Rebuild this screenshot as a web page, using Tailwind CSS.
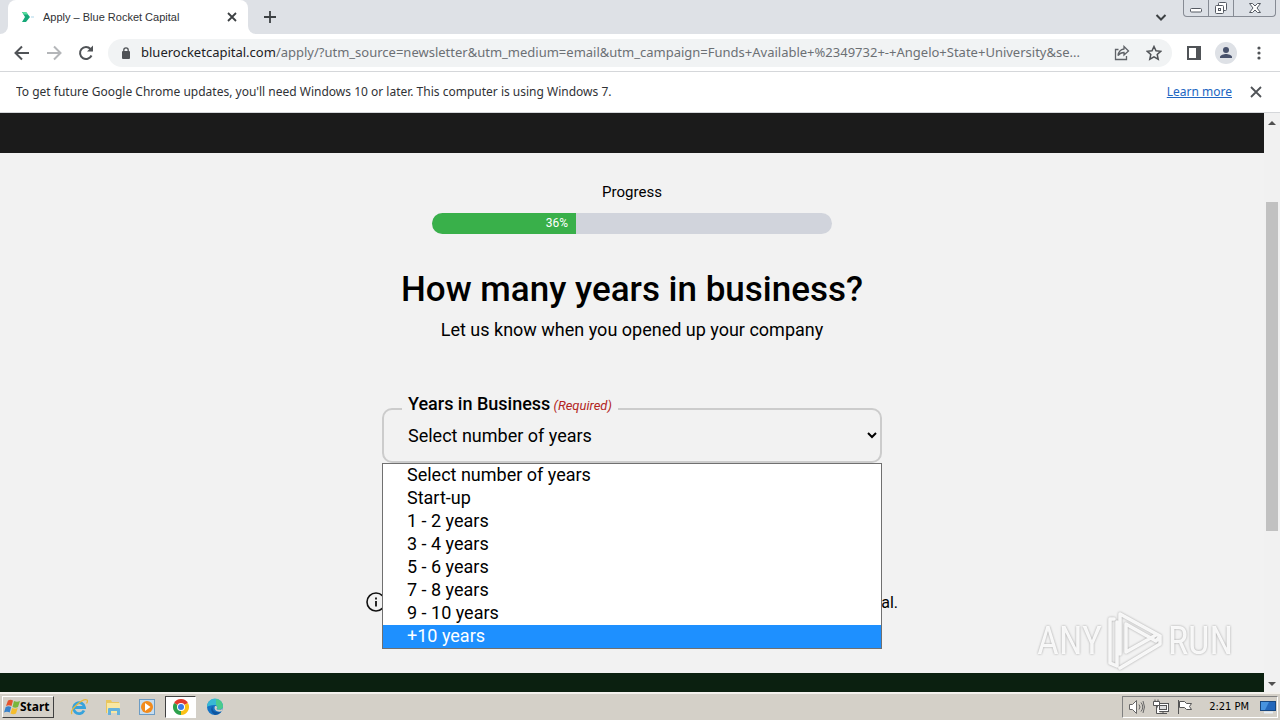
<!DOCTYPE html>
<html lang="en">
<head>
<meta charset="utf-8">
<meta name="viewport" content="width=device-width, initial-scale=1">
<title>Apply – Blue Rocket Capital</title>
<script src="https://cdn.jsdelivr.net/npm/@tailwindcss/browser@4"></script>
</head>
<body class="flex h-screen flex-col overflow-hidden bg-[#f2f2f2] font-['Noto_Sans',sans-serif] text-[#303236]">

<!-- Tab strip -->
<header class="flex h-[34px] shrink-0 items-start bg-[#dee1e6]">
  <div class="flex h-[34px] w-2 bg-white"><div class="w-full rounded-br-lg bg-[#dee1e6]"></div></div>
  <div class="flex h-[34px] w-60 items-center rounded-t-lg bg-white pr-[7px] pl-3">
    <svg class="h-4 w-4 shrink-0" viewBox="0 0 16 16"><path d="M2 3h4l4 5-4 5H2l3-5z" fill="#16a878"/><path d="M2 3h4l2 2.500H4z" fill="#58dfa0"/><path d="M11 8h3" stroke="#d6ebf5" stroke-width="2"/></svg>
    <span class="ml-[7px] grow truncate font-['Liberation_Sans',sans-serif] text-[11px]">Apply – Blue Rocket Capital</span>
    <button aria-label="Close tab" class="p-1"><svg class="h-2.5 w-2.5" viewBox="0 0 10 10" stroke="#3c4043" stroke-width="1.800"><path d="M1 1l8 8M9 1L1 9"/></svg></button>
  </div>
  <div class="flex h-[34px] w-2 bg-white"><div class="w-full rounded-bl-lg bg-[#dee1e6]"></div></div>
  <button aria-label="New tab" class="ml-1 flex h-[34px] w-5 items-center justify-center"><svg class="h-3 w-3" viewBox="0 0 12 12" stroke="#3c4043" stroke-width="1.800"><path d="M6 0v12M0 6h12"/></svg></button>
  <div class="grow"></div>
  <button aria-label="Search tabs" class="mr-4 flex h-[34px] w-3 items-center justify-center"><svg class="h-3 w-3" viewBox="0 0 12 12" fill="none" stroke="#3c4043" stroke-width="2"><path d="M1.500 4L6 8.500 10.500 4"/></svg></button>
  <div class="mr-1 flex h-[17px] rounded-b border border-t-0 border-[#868b94] bg-[#dce0e6]">
    <button aria-label="Minimize" class="flex w-[25px] items-center justify-center border-r border-[#868b94]"><svg class="h-4 w-3" viewBox="0 0 12 16"><rect x=".5" y="8.500" width="11" height="3.500" rx="1" fill="#fff" stroke="#555a63"/></svg></button>
    <button aria-label="Restore" class="flex w-[25px] items-center justify-center border-r border-[#868b94]"><svg class="h-4 w-3.5" viewBox="0 0 14 16" fill="#fff" stroke="#555a63"><rect x="4.500" y="2.500" width="8" height="8" rx="1"/><rect x="1.500" y="5.500" width="8" height="8" rx="1"/><rect x="4.500" y="8.500" width="2" height="2"/></svg></button>
    <button aria-label="Close window" class="flex w-[41px] items-center justify-center"><svg class="h-4 w-3" viewBox="0 0 12 16" fill="#fff" stroke="#555a63"><path d="M.5 3.500h3L6 6l2.500-2.500h3L8 8l3.500 4.500h-3L6 10l-2.500 2.500h-3L4 8z"/></svg></button>
  </div>
</header>

<!-- Toolbar -->
<nav aria-label="Browser toolbar" class="flex h-[38px] shrink-0 items-center border-b border-[#d5d7da] bg-white pr-[18px] pl-3.5">
  <button aria-label="Back" class="mr-4"><svg class="h-4 w-4" viewBox="0 0 16 16" fill="none" stroke="#505357" stroke-width="2"><path d="M15 8H2M8 1.500L1.500 8 8 14.500"/></svg></button>
  <button aria-label="Forward" class="mr-4"><svg class="h-4 w-4" viewBox="0 0 16 16" fill="none" stroke="#b4b6b9" stroke-width="2"><path d="M1 8h13M8 1.500L14.500 8 8 14.500"/></svg></button>
  <button aria-label="Reload" class="mr-3.5"><svg class="h-4 w-4" viewBox="0 0 16 16" fill="none" stroke="#505357" stroke-width="2"><path d="M13.500 10.500A6 6 0 1 1 12.500 4L14 5.500"/><path d="M9 6.500h6V.5z" fill="#505357" stroke="none"/></svg></button>
  <div class="flex h-7 min-w-0 grow items-center rounded-full bg-[#f1f3f4] pr-2.5 pl-3.5">
    <svg class="mr-[11px] h-3 w-2 shrink-0" viewBox="0 0 8 12"><rect y="4" width="8" height="8" rx="1" fill="#505357"/><path d="M1.800 4.500V3a2.200 2.200 0 0 1 4.400 0v1.500" fill="none" stroke="#505357" stroke-width="1.300"/></svg>
    <span class="grow truncate text-[13px] text-[#6c7074]"><span class="text-[#202124]">bluerocketcapital.com</span>/apply/?utm_source=newsletter&amp;utm_medium=email&amp;utm_campaign=Funds+Available+%2349732+-+Angelo+State+University&amp;se...</span>
    <button aria-label="Share" class="ml-0.5 shrink-0"><svg class="h-4 w-4" viewBox="0 0 16 16" fill="none" stroke="#606368" stroke-width="1.300"><path d="M4.500 4.500H1.500v10h11V11M10 1.500L14.500 6 10 10V7.500c-3 0-4.500 1-6 3 .5-3.500 2.500-6 6-6.500z"/></svg></button>
    <button aria-label="Bookmark" class="ml-4 shrink-0"><svg class="h-4 w-4" viewBox="0 0 16 16" fill="none" stroke="#505357" stroke-width="1.500"><path d="M8 1.500l2 4.300 4.700.5-3.500 3.200 1 4.700L8 11.800l-4.200 2.400 1-4.700L1.300 6.300 6 5.800z"/></svg></button>
  </div>
  <button aria-label="Side panel" class="ml-3.5"><svg class="h-4 w-4" viewBox="0 0 16 16"><rect x="2" y="2" width="12" height="12" fill="#fff" stroke="#505357" stroke-width="2"/><path d="M10 2h5v12h-5z" fill="#505357"/></svg></button>
  <button aria-label="Profile" class="ml-[13px]"><svg class="h-[22px] w-[22px]" viewBox="0 0 22 22"><circle cx="11" cy="11" r="11" fill="#dee1e6"/><circle cx="11" cy="8" r="3" fill="#47516b"/><path d="M5 16v-1c0-2 4-3 6-3s6 1 6 3v1z" fill="#47516b"/></svg></button>
  <button aria-label="Menu" class="ml-[19px] w-1.5"><svg class="h-4 w-1.5" viewBox="0 0 6 16" fill="#505357"><circle cx="3" cy="3" r="1.600"/><circle cx="3" cy="8" r="1.600"/><circle cx="3" cy="13" r="1.600"/></svg></button>
</nav>

<!-- Update notice -->
<div class="flex h-[41px] shrink-0 items-center border-b border-[#d5d7da] bg-white pr-[18px] pl-4 text-xs">
  <span class="grow truncate">To get future Google Chrome updates, you'll need Windows 10 or later. This computer is using Windows 7.</span>
  <a href="#" class="text-[#2166c2] underline">Learn more</a>
  <button aria-label="Dismiss" class="ml-[18px]"><svg class="h-3 w-3" viewBox="0 0 12 12" stroke="#505357" stroke-width="1.800"><path d="M1 1l10 10M11 1L1 11"/></svg></button>
</div>

<!-- Page -->
<div class="relative flex min-h-0 grow">
  <main class="flex min-w-0 grow flex-col items-center bg-[#f2f2f2] font-[Roboto,sans-serif] text-black">
    <div class="h-10 w-full shrink-0 bg-[#1b1b1b]"></div>
    <p class="mt-7 text-[15px] leading-[22px]">Progress</p>
    <div role="progressbar" aria-label="Progress" aria-valuenow="36" aria-valuemin="0" aria-valuemax="100" class="mt-2.5 h-[21px] w-[400px] overflow-hidden rounded-full bg-[#d1d4dc]">
      <div class="h-full bg-[#39b04a] pr-2 text-right text-xs leading-[21px] text-white" style="width:36%">36%</div>
    </div>
    <h1 class="mt-[33px] text-[35px] leading-[46px] font-medium">How many years in business?</h1>
    <p class="mt-1 text-lg leading-[26px]">Let us know when you opened up your company</p>
    <div class="relative mt-[65px] w-[500px]">
      <label for="years" class="absolute -top-4 left-5 bg-[#f2f2f2] px-1.5 text-lg leading-6 font-medium">Years in Business<span class="text-[13px] font-normal text-[#b3261e] italic"> (Required)</span></label>
      <select id="years" class="block h-[55px] w-full appearance-none rounded-[10px] border-2 border-[#ccc] bg-transparent px-6 text-lg">
        <option>Select number of years</option><option>Start-up</option><option>1 - 2 years</option><option>3 - 4 years</option><option>5 - 6 years</option><option>7 - 8 years</option><option>9 - 10 years</option><option>+10 years</option>
      </select>
      <svg class="pointer-events-none absolute top-[22px] right-[5px] h-2.5 w-2.5" viewBox="0 0 10 10" fill="none" stroke="#000" stroke-width="2"><path d="M1 3l4 4 4-4"/></svg>
      <ul role="listbox" aria-label="Years in Business" class="absolute top-full left-0 z-10 w-full border border-[#707070] bg-white text-lg leading-[21px] [&>li]:px-6 [&>li]:pb-0.5">
        <li role="option">Select number of years</li>
        <li role="option">Start-up</li>
        <li role="option">1 - 2 years</li>
        <li role="option">3 - 4 years</li>
        <li role="option">5 - 6 years</li>
        <li role="option">7 - 8 years</li>
        <li role="option">9 - 10 years</li>
        <li role="option" aria-selected="true" class="bg-[#1e90ff] text-white">+10 years</li>
      </ul>
    </div>
    <div class="mt-32 flex w-[532px] items-start justify-between text-base leading-6">
      <svg class="mt-px h-5 w-5" viewBox="0 0 20 20"><circle cx="10" cy="10" r="9" fill="none" stroke="#111" stroke-width="1.600"/><path d="M10 9v5.500M10 5.500v2" stroke="#111" stroke-width="1.800"/></svg>
      <span>al.</span>
    </div>
    <div class="mt-auto h-[19px] w-full shrink-0 bg-[#0b2010]"></div>
  </main>

  <div aria-hidden="true" class="flex w-4 shrink-0 flex-col items-center bg-[#f1f1f1] py-1.5">
    <svg class="mt-0.5 h-1 w-2" viewBox="0 0 8 4"><path d="M0 4l4-4 4 4z" fill="#505050"/></svg>
    <div class="mt-[77px] h-[329px] w-3 bg-[#c1c1c1]"></div>
    <svg class="mt-auto h-1 w-2" viewBox="0 0 8 4"><path d="M0 0l4 4 4-4z" fill="#505050"/></svg>
  </div>

  <!-- Watermark -->
  <div class="absolute right-[47px] bottom-5 flex items-center gap-1 font-['Roboto_Condensed',sans-serif] text-[38px] leading-[62px] text-white/90 drop-shadow-[0_0_1px_#999]">
    <span>ANY</span>
    <svg class="h-[62px] w-[58px]" viewBox="0 0 58 62" fill="none" stroke="#fff" stroke-opacity=".9" stroke-width="3.500" stroke-linejoin="round" stroke-linecap="round"><path d="M8 9H4v44l7 3V12M14 44V4l40 22-4 5-30-17v28l30-17M14 58l40-24v-8"/></svg>
    <span>RUN</span>
  </div>
</div>

<!-- Taskbar -->
<footer class="flex h-7 shrink-0 items-center border-t-2 border-[#f3f1ed] bg-[#d4d0c8] px-0.5 font-['DejaVu_Sans_Condensed','DejaVu_Sans',sans-serif] text-black">
  <button class="flex h-[22px] w-[52px] items-center border border-t-white border-r-[#404040] border-b-[#404040] border-l-white pl-px text-xs font-bold">
    <svg class="h-4 w-4 shrink-0" viewBox="0 0 16 16"><path d="M4 1.500c2-1 3-1 5 0L7.500 7C5.500 6 4 6 2 7z" fill="#e5532d"/><path d="M10 2c2 1 4 1 6 0L14 8c-2 1-3.500 1-5.500 0z" fill="#79b63c"/><path d="M1.700 8c2-1 3.500-1 5.500 0l-1.500 5.500C4 12.500 2 12.500 0 13.500z" fill="#3882cb"/><path d="M8.200 9c2 1 3.500 1 5.500 0L12 14.500c-2 1-3.500 1-5.500 0z" fill="#f5bd2c"/></svg><span class="font-['Noto_Sans',sans-serif]">Start</span>
  </button>
  <button aria-label="Internet Explorer" class="ml-4"><svg class="h-[18px] w-[18px]" viewBox="0 0 18 18" fill="none"><path d="M14 12.500A5.500 5.500 0 1 1 14.500 9.500H5" stroke="#37a3dc" stroke-width="2.800"/><path d="M2 16C-1 12 13 0 17 2c1 .6.500 2-.5 3.500" stroke="#e7b93c" stroke-width="1.300"/></svg></button>
  <button aria-label="Explorer" class="ml-4"><svg class="h-[18px] w-[18px]" viewBox="0 0 18 18"><path d="M2 2h5l1 2h7v11H2z" fill="#e9c65e"/><path d="M3 5h13v10H3z" fill="#f8e7a2"/><path d="M4 17v-6q0-1 1-1h10q1 0 1 1v6h-3v-4H7v4z" fill="#65b2dc"/></svg></button>
  <button aria-label="Media Player" class="ml-4"><svg class="h-[18px] w-[18px]" viewBox="0 0 18 18"><rect x="1.500" y="1.500" width="15" height="15" fill="#c6ddf0" stroke="#6c9cc4"/><circle cx="9" cy="9" r="6" fill="#f28b1c"/><path d="M7 5l5.500 4L7 13z" fill="#fff"/></svg></button>
  <button aria-label="Google Chrome" class="ml-[9px] flex h-[22px] w-[31px] items-center justify-center border border-t-[#404040] border-r-white border-b-white border-l-[#404040] bg-white"><svg class="h-4 w-4" viewBox="0 0 16 16"><path d="M8 8L1.070 4A8 8 0 0 1 14.930 4z" fill="#e33b2e"/><path d="M8 8l6.930-4A8 8 0 0 1 8 16z" fill="#fbc116"/><path d="M8 8v8A8 8 0 0 1 1.070 4z" fill="#2da14c"/><circle cx="8" cy="8" r="4" fill="#fff"/><circle cx="8" cy="8" r="3" fill="#3a7be8"/></svg></button>
  <button aria-label="Microsoft Edge" class="ml-2.5"><svg class="h-[18px] w-[18px]" viewBox="0 0 18 18"><circle cx="9" cy="9" r="8" fill="#1673c4"/><path d="M1 9a8 8 0 0 1 16-1c.3 3-4 4.500-6 3 1-2 0-4-3-4S2 8 1 9z" fill="#38b9d4"/><path d="M10 1a8 8 0 0 1 7 7c.3 3-4 4.500-6 3 1-2 .5-3-1-4z" fill="#4acb8c"/><path d="M7 8c-2 4 2 7 7 6h1a8 8 0 0 1-6 3C5 15 4 10 7 8z" fill="#0f559f"/><path d="M9 8c2-.5 3 1 1.500 3 2 1.500 5 1 6.500-1l-1 3c-4 2-9-1-7-5z" fill="#d4d0c8"/></svg></button>
  <div class="ml-auto flex h-[22px] items-center border border-t-[#808080] border-r-white border-b-white border-l-[#808080] pr-px pl-1.5 text-[11px]">
    <svg class="h-4 w-4" viewBox="0 0 16 16" fill="#fff" stroke="#666"><path d="M.5 5.500h3l4-4v13l-4-4h-3z"/><path d="M10 5.500q2 2.500 0 5M12 3.500q3.500 4.500 0 9M14 2q3 6 0 12" fill="none"/></svg>
    <svg class="ml-2 h-4 w-4" viewBox="0 0 16 16" fill="#fff" stroke="#555"><rect x="4.500" y="4.500" width="11" height="8"/><rect x="6.500" y="6.500" width="7" height="4" fill="#ddd"/><path d="M7 14.500h7M10 12.500v2M3.500 6v8.500H7"/><path d="M.5 2.500h6v4h-6zM2 .5v2M5 .5v2"/></svg>
    <svg class="ml-2 h-4 w-4" viewBox="0 0 16 16" fill="#fff" stroke="#555"><path d="M2.500 2.500h5l2 2h5l-2 3 2 3h-5l-2-2h-5zM1.500 1v14"/></svg>
    <span class="ml-4">2:21 PM</span>
    <svg class="ml-[11px] h-4 w-4" viewBox="0 0 16 16"><rect x=".5" y="2.500" width="15" height="9" fill="#2367bb" stroke="#174780"/><path d="M1 3h8L5 11H1z" fill="#4793df"/><path d="M4 13.500h9" stroke="#e5edf5" stroke-width="2"/></svg>
  </div>
</footer>
</body>
</html>
